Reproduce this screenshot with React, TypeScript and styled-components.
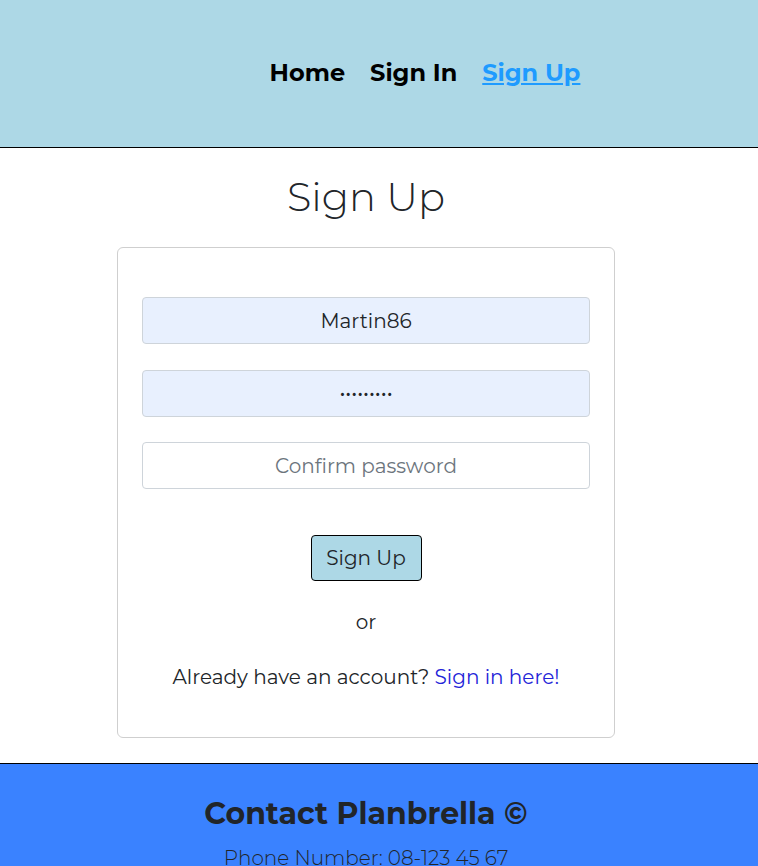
import React from 'react';
import styled, { createGlobalStyle } from 'styled-components';

const GlobalStyle = createGlobalStyle`
  * {
    box-sizing: border-box;
  }

  body {
    margin: 0;
    font-family: "Montserrat", "Open Sans", "Noto Sans", sans-serif;
    color: #212529;
    background: white;
  }
`;

const Header = styled.header`
  height: 148px;
  background: #add8e6;
  border-bottom: 1px solid black;
  display: flex;
  align-items: center;
  justify-content: center;
  padding-left: 92px;
  padding-bottom: 2px;
`;

const Nav = styled.nav`
  display: flex;
  gap: 25px;
`;

const NavLink = styled.a<{ active?: boolean }>`
  font-size: 24px;
  font-weight: 700;
  color: ${props => props.active ? '#1e9bff' : 'black'};
  text-decoration: ${props => props.active ? 'underline' : 'none'};
  cursor: pointer;
`;

const Main = styled.main`
  display: flex;
  flex-direction: column;
  align-items: center;
  padding: 0 26px 25px 0;
`;

const Title = styled.h1`
  margin: 25px 0 26px;
  font-size: 40px;
  font-weight: 300;
  line-height: 48px;
`;

const Card = styled.form`
  width: 498px;
  border: 1px solid #cfcfcf;
  border-radius: 6px;
  padding: 49px 24px 45px;
  display: flex;
  flex-direction: column;
  align-items: center;
`;

const Input = styled.input<{ filled?: boolean }>`
  width: 100%;
  height: 47px;
  margin-bottom: 25.5px;
  padding: 8px 16px;
  font-family: inherit;
  font-size: 20px;
  text-align: center;
  color: #212529;
  background: ${props => props.filled ? '#e8f0fe' : 'white'};
  border: 1px solid #ced4da;
  border-radius: 4px;
  outline: none;

  &::placeholder {
    color: #6c757d;
  }
`;

const SubmitButton = styled.button`
  margin-top: 20.5px;
  width: 111px;
  height: 46px;
  font-family: inherit;
  font-size: 20px;
  color: #212529;
  background: #add8e6;
  border: 1px solid black;
  border-radius: 4px;
  cursor: pointer;
`;

const Text = styled.p`
  margin: 0;
  font-size: 20px;
  line-height: 30px;
`;

const OrText = styled(Text)`
  margin-top: 26px;
`;

const AccountText = styled(Text)`
  margin-top: 25px;
`;

const InlineLink = styled.a`
  color: #2424d8;
  text-decoration: none;
  cursor: pointer;
`;

const Footer = styled.footer`
  background: #3a82ff;
  border-top: 1px solid black;
  display: flex;
  flex-direction: column;
  align-items: center;
  padding: 30px 26px 0 0;
`;

const FooterTitle = styled.h2`
  margin: 0 0 9px;
  font-size: 30px;
  font-weight: 700;
  line-height: 40px;
  color: #212529;
`;

const FooterText = styled.p`
  margin: 0;
  font-size: 20px;
  font-weight: 300;
  line-height: 30px;
  color: #212529;
`;

export default function App() {
  return (
    <>
      <GlobalStyle />
      <Header>
        <Nav>
          <NavLink>Home</NavLink>
          <NavLink>Sign In</NavLink>
          <NavLink active>Sign Up</NavLink>
        </Nav>
      </Header>
      <Main>
        <Title>Sign Up</Title>
        <Card onSubmit={e => e.preventDefault()}>
          <Input filled type="text" defaultValue="Martin86" placeholder="Username" />
          <Input filled type="password" defaultValue="secret123" placeholder="Password" />
          <Input type="password" placeholder="Confirm password" />
          <SubmitButton type="submit">Sign Up</SubmitButton>
          <OrText>or</OrText>
          <AccountText>
            Already have an account? <InlineLink>Sign in here!</InlineLink>
          </AccountText>
        </Card>
      </Main>
      <Footer>
        <FooterTitle>Contact Planbrella ©</FooterTitle>
        <FooterText>Phone Number: 08-123 45 67</FooterText>
      </Footer>
    </>
  );
}
